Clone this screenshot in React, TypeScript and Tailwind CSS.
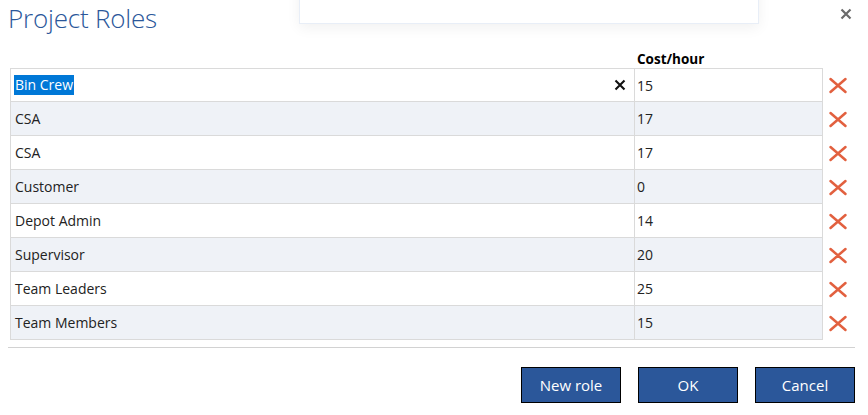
import React from 'react';

const roles = [
  { name: 'Bin Crew', cost: 15 },
  { name: 'CSA', cost: 17 },
  { name: 'CSA', cost: 17 },
  { name: 'Customer', cost: 0 },
  { name: 'Depot Admin', cost: 14 },
  { name: 'Supervisor', cost: 20 },
  { name: 'Team Leaders', cost: 25 },
  { name: 'Team Members', cost: 15 },
];

const RemoveIcon = () => (
  <svg width="20" height="17" viewBox="0 0 20 17">
    <path d="M2.5 2 L17.5 15 M17.5 2 L2.5 15" stroke="#e2603f" strokeWidth="2.5" strokeLinecap="round" />
  </svg>
);

const ClearIcon = () => (
  <svg width="12" height="12" viewBox="0 0 12 12">
    <path d="M1.5 1.5 L10.5 10.5 M10.5 1.5 L1.5 10.5" stroke="#111" strokeWidth="2.1" />
  </svg>
);

const App = () => {
  return (
    <div className="relative w-[868px] h-[415px] bg-white overflow-hidden font-['Open_Sans',sans-serif] text-[#222]">
      {/* Floating panel peeking from the top */}
      <div className="absolute left-[299px] top-[-20px] w-[460px] h-[44px] bg-white border border-[#e8eef7] shadow-[0_4px_14px_rgba(0,0,0,0.06)]"></div>

      {/* Close */}
      <button className="absolute right-[15px] top-[7px] w-[14px] h-[14px] flex items-center justify-center">
        <svg width="12" height="12" viewBox="0 0 12 12">
          <path d="M1.5 1.5 L10.5 10.5 M10.5 1.5 L1.5 10.5" stroke="#6b6b6b" strokeWidth="2.2" />
        </svg>
      </button>

      <div className="flex flex-col pl-[10px] pr-[13px]">
        <div className="h-[44px] flex items-start">
          <h1 className="text-[26px] font-light text-[#2b579a] leading-none mt-[5px] ml-[-2px] tracking-[-0.2px]">Project Roles</h1>
        </div>

        <div className="h-[24px] flex items-end pb-[2px]">
          <div className="w-[627px]"></div>
          <span className="text-[13.5px] font-bold text-black leading-none">Cost/hour</span>
        </div>

        <div className="flex flex-col">
          {roles.map((r, i) => (
            <div key={i} className="flex items-center">
              <div
                className={`flex w-[813px] h-[34px] border-x border-b border-[#dadada] ${i === 0 ? 'border-t' : ''} ${
                  i % 2 === 1 ? 'bg-[#eff2f7]' : 'bg-white'
                }`}
              >
                <div className="w-[624px] flex items-center justify-between pl-[3px] pr-[8px] border-r border-[#dadada] text-[14px]">
                  {i === 0 ? (
                    <>
                      <span className="bg-[#0078d7] text-white leading-[20px] px-[1px]">{r.name}</span>
                      <ClearIcon />
                    </>
                  ) : (
                    <span className="px-[1px]">{r.name}</span>
                  )}
                </div>
                <div className="flex-1 flex items-center pl-[2px] text-[14px]">{r.cost}</div>
              </div>
              <div className="ml-[5px] flex items-center">
                <RemoveIcon />
              </div>
            </div>
          ))}
        </div>

        <div className="mt-[7px] ml-[-2px] h-px bg-[#d2d2d2] w-[847px]"></div>

        <div className="flex justify-end gap-[17px] mt-[19px]">
          <button className="w-[100px] h-[36px] bg-[#2b579a] border border-black text-white text-[15px]">New role</button>
          <button className="w-[100px] h-[36px] bg-[#2b579a] border border-black text-white text-[15px]">OK</button>
          <button className="w-[100px] h-[36px] bg-[#2b579a] border border-black text-white text-[15px]">Cancel</button>
        </div>
      </div>
    </div>
  );
};

export default App;
